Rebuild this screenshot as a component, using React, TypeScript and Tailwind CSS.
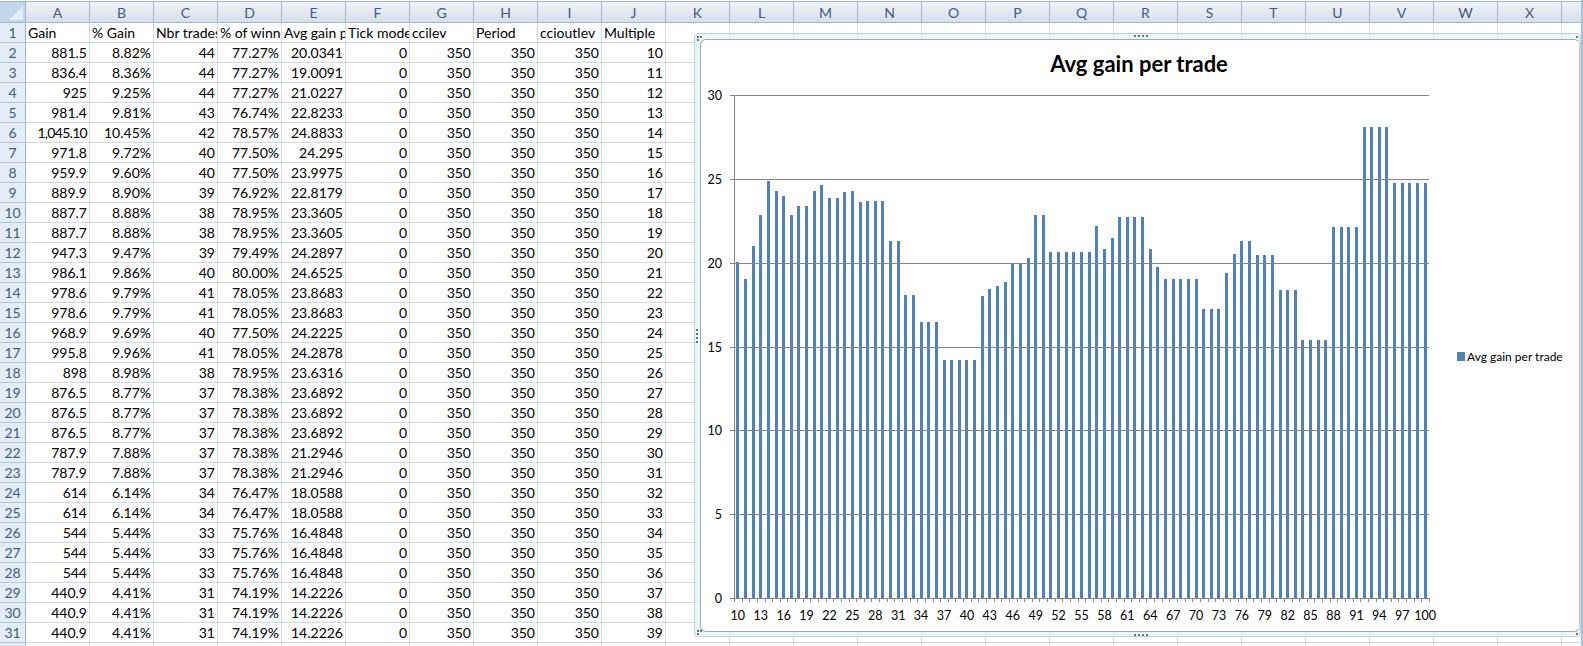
import React from "react";

const COLS = "ABCDEFGHIJKLMNOPQRSTUVWX".split("");
const HEAD = ["Gain", "% Gain", "Nbr trades", "% of winners", "Avg gain per trade", "Tick mode", "ccilev", "Period", "ccioutlev", "Multiple"];

type R = [string, string, string, string, string];
const r: R[] = [
  ["881.5", "8.82%", "44", "77.27%", "20.0341"],
  ["836.4", "8.36%", "44", "77.27%", "19.0091"],
  ["925", "9.25%", "44", "77.27%", "21.0227"],
  ["981.4", "9.81%", "43", "76.74%", "22.8233"],
  ["1,045.10", "10.45%", "42", "78.57%", "24.8833"],
  ["971.8", "9.72%", "40", "77.50%", "24.295"],
  ["959.9", "9.60%", "40", "77.50%", "23.9975"],
  ["889.9", "8.90%", "39", "76.92%", "22.8179"],
  ["887.7", "8.88%", "38", "78.95%", "23.3605"],
  ["887.7", "8.88%", "38", "78.95%", "23.3605"],
  ["947.3", "9.47%", "39", "79.49%", "24.2897"],
  ["986.1", "9.86%", "40", "80.00%", "24.6525"],
  ["978.6", "9.79%", "41", "78.05%", "23.8683"],
  ["978.6", "9.79%", "41", "78.05%", "23.8683"],
  ["968.9", "9.69%", "40", "77.50%", "24.2225"],
  ["995.8", "9.96%", "41", "78.05%", "24.2878"],
  ["898", "8.98%", "38", "78.95%", "23.6316"],
  ["876.5", "8.77%", "37", "78.38%", "23.6892"],
  ["876.5", "8.77%", "37", "78.38%", "23.6892"],
  ["876.5", "8.77%", "37", "78.38%", "23.6892"],
  ["787.9", "7.88%", "37", "78.38%", "21.2946"],
  ["787.9", "7.88%", "37", "78.38%", "21.2946"],
  ["614", "6.14%", "34", "76.47%", "18.0588"],
  ["614", "6.14%", "34", "76.47%", "18.0588"],
  ["544", "5.44%", "33", "75.76%", "16.4848"],
  ["544", "5.44%", "33", "75.76%", "16.4848"],
  ["544", "5.44%", "33", "75.76%", "16.4848"],
  ["440.9", "4.41%", "31", "74.19%", "14.2226"],
  ["440.9", "4.41%", "31", "74.19%", "14.2226"],
  ["440.9", "4.41%", "31", "74.19%", "14.2226"],
];

const rep = (v: number, n: number) => Array.from({ length: n }, () => v);
const SERIES: number[] = [
  ...r.map((x) => parseFloat(x[4])),
  14.2226, 14.2226,
  18.0, 18.4, 18.6, 18.87, 20.0, 20.0, 20.27, 22.85, 22.85,
  ...rep(20.65, 6),
  22.2, 20.8, 21.45,
  ...rep(22.72, 4),
  20.8, 19.75,
  ...rep(19.03, 5),
  ...rep(17.22, 3),
  19.38, 20.5, 21.28, 21.28,
  ...rep(20.45, 3),
  ...rep(18.35, 3),
  ...rep(15.4, 4),
  ...rep(22.15, 4),
  ...rep(28.1, 4),
  ...rep(24.78, 5),
];

const AXIS_X = 734;
const RIGHT = 1429;
const Y0 = 598;
const PER_UNIT = 503 / 30;
const STEP = (RIGHT - AXIS_X) / 91;

function Chart() {
  const ticks = [0, 5, 10, 15, 20, 25, 30];
  return (
    <svg viewBox="700 39 880 593" width={880} height={593} className="block">
      <text x={1139} y={72} textAnchor="middle" fontSize={22} fontWeight={700} fill="#000">
        Avg gain per trade
      </text>
      {SERIES.map((v, i) => {
        const x = Math.round(AXIS_X + (i + 0.5) * STEP - 1.5);
        const top = Math.round(Y0 - v * PER_UNIT);
        return <rect key={i} x={x} y={top} width={3} height={Y0 - top} fill="#4f81bd" shapeRendering="crispEdges" />;
      })}
      {ticks.map((t) => {
        const y = Math.round(Y0 - t * PER_UNIT);
        return (
          <g key={t}>
            <rect x={730} y={y} width={RIGHT - 730} height={1} fill="#868686" shapeRendering="crispEdges" />
            <text x={722} y={y + 4.5} textAnchor="end" fontSize={12.5} fill="#000">
              {t}
            </text>
          </g>
        );
      })}
      <rect x={AXIS_X} y={95} width={1} height={503} fill="#868686" shapeRendering="crispEdges" />
      {Array.from({ length: 92 }, (_, i) => (
        <rect key={i} x={Math.round(AXIS_X + i * STEP)} y={598} width={1} height={4} fill="#868686" shapeRendering="crispEdges" />
      ))}
      {SERIES.map((_, i) =>
        i % 3 === 0 ? (
          <text key={i} x={AXIS_X + (i + 0.5) * STEP} y={620} textAnchor="middle" fontSize={12.5} fill="#000">
            {10 + i}
          </text>
        ) : null
      )}
      <rect x={1457} y={352} width={8} height={9} fill="#4f81bd" shapeRendering="crispEdges" />
      <text x={1467} y={360.5} fontSize={12} fill="#000">
        Avg gain per trade
      </text>
    </svg>
  );
}

function Dots({ vertical = false, className = "" }: { vertical?: boolean; className?: string }) {
  return (
    <div className={`absolute flex gap-[2px] ${vertical ? "flex-col" : "flex-row"} ${className}`}>
      {[0, 1, 2, 3].map((i) => (
        <span key={i} className="block w-[2px] h-[2px] bg-[#6b7680]" />
      ))}
    </div>
  );
}

function CornerDots({ className = "" }: { className?: string }) {
  return (
    <div className={`absolute grid grid-cols-2 gap-[1px] ${className}`}>
      {[0, 1, 2].map((i) => (
        <span key={i} className="block w-[2px] h-[2px] bg-[#6b7680]" />
      ))}
    </div>
  );
}

export default function App() {
  return (
    <div className="relative w-[1583px] h-[646px] overflow-hidden bg-white font-['Lato',sans-serif] text-[14px] text-black">
      <div className="flex">
        <div className="flex-1 min-w-0">
          {/* column headers */}
          <div className="flex h-[22px] border-t border-[#9eb6ce] mt-px">
            <div className="w-[26px] shrink-0 flex items-end justify-end bg-[#c4d6ea] border-r border-b border-[#9eb6ce]">
              <svg width="14" height="14" viewBox="0 0 14 14" className="mb-[2px] mr-[2px]">
                <path d="M14 0V14H0Z" fill="#e6eef7" />
              </svg>
            </div>
            {COLS.map((c) => (
              <div
                key={c}
                className="w-16 shrink-0 flex items-center justify-center border-r border-b border-[#9eb6ce] bg-linear-to-b from-[#eef2f8] to-[#d8dfeb] text-[#3f5d80]"
              >
                {c}
              </div>
            ))}
            <div className="flex-1 border-b border-[#9eb6ce] bg-linear-to-b from-[#eef2f8] to-[#d8dfeb]" />
          </div>

          {/* rows */}
          {Array.from({ length: 32 }, (_, idx) => {
            const row = idx + 1;
            const data = idx >= 1 && idx <= 30 ? r[idx - 1] : null;
            return (
              <div key={row} className="flex h-5">
                <div className="w-[26px] shrink-0 flex items-center justify-center bg-[#e4ecf7] border-r border-b border-[#b4c6dc] border-r-[#9eb6ce] text-[#3f5d80]">
                  {row}
                </div>
                {COLS.map((c, ci) => {
                  let text = "";
                  let right = false;
                  if (idx === 0 && ci < HEAD.length) text = HEAD[ci];
                  if (data) {
                    right = true;
                    if (ci < 5) text = data[ci];
                    else if (ci === 5) text = "0";
                    else if (ci >= 6 && ci <= 8) text = "350";
                    else if (ci === 9) text = String(idx + 9);
                  }
                  return (
                    <div
                      key={c}
                      className={`w-16 shrink-0 overflow-hidden whitespace-nowrap px-[2px] leading-[19px] border-r border-b border-[#d0d7e5] ${
                        right ? "text-right" : "text-left"
                      } ${text === "1,045.10" ? "tracking-[-0.7px]" : ""}`}
                    >
                      {text}
                    </div>
                  );
                })}
                <div className="flex-1 border-b border-[#d0d7e5]" />
              </div>
            );
          })}
        </div>
        <div className="w-[2px] shrink-0 bg-[#a9c0de] z-10" />
      </div>

      {/* embedded chart */}
      <div className="absolute left-[694px] top-[33px] w-[887px] h-[604px] rounded-[4px] border border-[#c4cfcf] bg-[#def6f7]/75 pl-[5px] pt-[5px]">
        <div className="w-[880px] h-[593px] overflow-hidden rounded-[6px] bg-white border border-[#a3acac] border-r-[#c6cdcd]">
          <div className="-ml-px -mt-px">
            <Chart />
          </div>
        </div>
        <Dots className="left-[439px] top-[1px]" />
        <Dots className="left-[439px] bottom-0" />
        <Dots vertical className="left-[1px] top-[295px]" />
        <CornerDots className="left-[2px] top-[2px]" />
        <CornerDots className="left-[2px] bottom-[1px]" />
        <span className="absolute right-[2px] top-[2px] block w-[2px] h-[2px] bg-[#6b7680]" />
        <span className="absolute right-[2px] bottom-[1px] block w-[2px] h-[2px] bg-[#6b7680]" />
      </div>
    </div>
  );
}
